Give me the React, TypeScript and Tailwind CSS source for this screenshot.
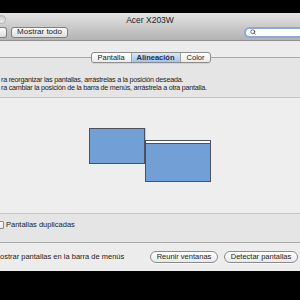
import { Search } from "lucide-react"

const font = { fontFamily: '"Liberation Sans", Arial, sans-serif' }

function Segment({ label, active, first, last }: { label: string; active?: boolean; first?: boolean; last?: boolean }) {
  return (
    <div
      className={`flex items-center justify-center h-full text-[7.5px] leading-none whitespace-nowrap ${
        active
          ? "bg-gradient-to-b from-[#d9e8f9] to-[#a3c3ea] text-[#1c2d4a] font-bold px-[5px]"
          : "bg-gradient-to-b from-[#ffffff] to-[#ebebeb] text-[#222] px-[6px]"
      } ${first ? "rounded-l-[3px]" : ""} ${last ? "rounded-r-[3px]" : "border-r border-[#a0a0a0]"}`}
    >
      {label}
    </div>
  )
}

function PillButton({ label, w }: { label: string; w: string }) {
  return (
    <button
      className={`${w} h-[12px] rounded-full border border-[#8a8a8a] bg-gradient-to-b from-[#ffffff] to-[#e9e9e9] text-[7.5px] leading-none text-[#222] whitespace-nowrap shadow-[0_1px_0_rgba(255,255,255,0.7)]`}
    >
      {label}
    </button>
  )
}

export default function App() {
  return (
    <div className="w-[300px] h-[300px] overflow-hidden flex flex-col bg-black" style={font}>
      <div className="h-[13px] bg-black shrink-0" />

      {/* toolbar */}
      <div className="h-[28px] shrink-0 bg-gradient-to-b from-[#e3e3e3] to-[#b3b3b3] border-b border-[#8f8f8f] flex flex-col">
        <div className="relative h-[13px] flex items-center justify-center">
          <div className="absolute left-[-3px] top-[2px] size-[9px] rounded-full bg-gradient-to-b from-[#c9c9c9] to-[#eeeeee] border border-[#b0b0b0]" />
          <span className="text-[8.5px] leading-none text-[#222] pt-[1px] whitespace-nowrap">Acer X203W</span>
        </div>
        <div className="flex items-center h-[12px]">
          <div className="w-[7px] h-[11px] rounded-r-[3px] border border-l-0 border-[#7f7f7f] bg-gradient-to-b from-[#fbfbfb] to-[#dedede]" />
          <button className="ml-[4px] w-[57px] h-[11px] rounded-[3px] border border-[#7f7f7f] bg-gradient-to-b from-[#fbfbfb] to-[#dedede] text-[8px] leading-none text-[#222] whitespace-nowrap">
            Mostrar todo
          </button>
          <div className="ml-auto w-[59px] mr-[-3px] h-[11px] rounded-l-full border-2 border-r-0 border-[#8ea9d8] bg-white flex items-center pl-[4px]">
            <Search className="size-[6px] text-[#444]" strokeWidth={3} />
          </div>
        </div>
      </div>

      {/* content */}
      <div className="flex-1 bg-[#ececec] flex flex-col">
        <div className="pt-[11px] flex flex-col">
          <div className="relative z-10 self-center flex h-[11px] ml-[2px] rounded-[3px] border border-[#8c8c8c] shadow-[0_1px_0_rgba(0,0,0,0.08)]">
            <Segment label="Pantalla" first />
            <Segment label="Alineación" active />
            <Segment label="Color" last />
          </div>

          <div className="-mt-[6px] mx-[-3px] border border-[#a9a9a9] bg-[#e5e5e5] flex flex-col">
            <div className="h-[39px] pt-[18px] pl-[3px] text-[7.2px] leading-[8px] tracking-[-0.25px] text-[#222] whitespace-nowrap">
              <p>ra reorganizar las pantallas, arrástrelas a la posición deseada.</p>
              <p>ra cambiar la posición de la barra de menús, arrástrela a otra pantalla.</p>
            </div>

            <div className="h-[117px] bg-[#eeeeee] border-y border-[#c4c4c4] flex items-start justify-center">
              <div className="flex items-start pt-[30px] mr-[1px]">
                <div className="w-[56px] h-[36px] bg-[#729fd6] border border-[#4b5160] shadow-[1px_0_0_#c8c8c8]" />
                <div className="mt-[12px] w-[66px] h-[42px] bg-[#729fd6] border border-[#4b5160] flex flex-col">
                  <div className="h-[3px] bg-white border-b border-[#4b5160]" />
                </div>
              </div>
            </div>

            <div className="h-[28px] flex items-start pt-[7px] gap-[2px] ml-[-2px]">
              <div className="size-[8px] rounded-[1px] border border-[#8a8a8a] bg-gradient-to-b from-white to-[#e6e6e6]" />
              <span className="text-[7.5px] leading-[8px] text-[#222] whitespace-nowrap">Pantallas duplicadas</span>
            </div>
          </div>
        </div>

        <div className="flex-1 flex items-center pr-[2px]">
          <span className="text-[7.5px] leading-none text-[#222] whitespace-nowrap">ostrar pantallas en la barra de menús</span>
          <div className="ml-auto flex gap-[6px]">
            <PillButton label="Reunir ventanas" w="w-[68px]" />
            <PillButton label="Detectar pantallas" w="w-[74px]" />
          </div>
        </div>
      </div>

      <div className="h-[29px] shrink-0 bg-black" />
    </div>
  )
}
